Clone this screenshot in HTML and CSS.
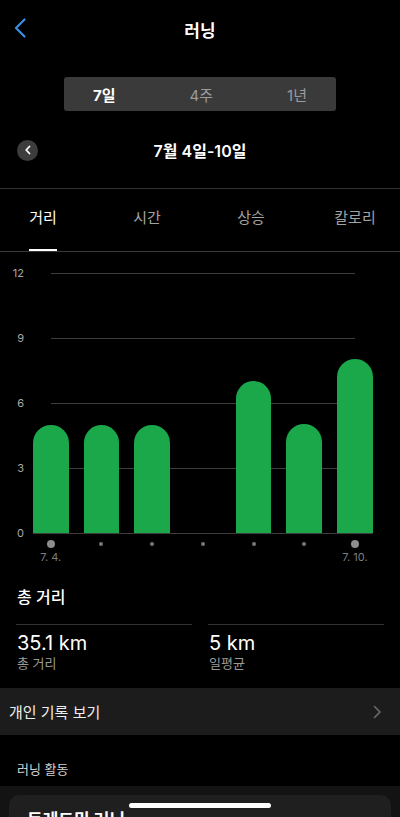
FILE: index.html
```html
<!DOCTYPE html>
<html lang="ko">
  <head>
    <meta charset="UTF-8" />
    <meta name="viewport" content="width=device-width, initial-scale=1.0" />
    <title>러닝</title>
    <link rel="stylesheet" href="styles.css">
  </head>
  <body>
    <div class="screen">
      <div class="nav">
        <button class="nav-back" aria-label="뒤로">
          <svg width="12" height="20" viewBox="0 0 12 20">
            <path d="M10.5 1.5 L2 10 L10.5 18.5" fill="none" stroke="#3a8ee6" stroke-width="2.2" stroke-linecap="round" stroke-linejoin="round" />
          </svg>
        </button>
        <h1 class="nav-title">러닝</h1>
        <span></span>
      </div>

      <div class="segment">
        <span class="segment-item active">7일</span>
        <span class="segment-item">4주</span>
        <span class="segment-item">1년</span>
      </div>

      <div class="date-row">
        <button class="date-prev" aria-label="이전">
          <svg width="8" height="10" viewBox="0 0 8 10">
            <path d="M5.5 1.5 L2.2 5 L5.5 8.5" fill="none" stroke="#fff" stroke-width="1.8" stroke-linecap="round" stroke-linejoin="round" />
          </svg>
        </button>
        <div class="date-label">7월 4일-10일</div>
      </div>

      <div class="tabs">
        <div class="tab-list">
          <div class="tab"><span class="tab-label active">거리</span></div>
          <div class="tab"><span class="tab-label">시간</span></div>
          <div class="tab"><span class="tab-label">상승</span></div>
          <div class="tab"><span class="tab-label">칼로리</span></div>
        </div>
      </div>

      <div class="chart">
        <div class="plot">
          <div class="gridlines">
            <div class="grid-row"><span class="y-label">12</span><span class="line"></span></div>
            <div class="grid-row"><span class="y-label">9</span><span class="line"></span></div>
            <div class="grid-row"><span class="y-label">6</span><span class="line"></span></div>
            <div class="grid-row"><span class="y-label">3</span><span class="line"></span></div>
            <div class="grid-row"><span class="y-label">0</span><span class="line base"></span></div>
          </div>
          <div class="bars">
            <div class="bar" style="height: 108px"></div>
            <div class="bar" style="height: 108px"></div>
            <div class="bar" style="height: 108px"></div>
            <div class="bar empty"></div>
            <div class="bar" style="height: 152px"></div>
            <div class="bar" style="height: 109px"></div>
            <div class="bar" style="height: 174px"></div>
          </div>
        </div>
        <div class="x-axis">
          <div class="x-col"><span class="dot big"></span><span class="x-label">7. 4.</span></div>
          <div class="x-col"><span class="dot"></span></div>
          <div class="x-col"><span class="dot"></span></div>
          <div class="x-col"><span class="dot"></span></div>
          <div class="x-col"><span class="dot"></span></div>
          <div class="x-col"><span class="dot"></span></div>
          <div class="x-col"><span class="dot big"></span><span class="x-label">7. 10.</span></div>
        </div>
      </div>

      <div class="summary">
        <h2 class="summary-title">총 거리</h2>
        <div class="stats">
          <div class="stat">
            <div class="stat-value">35.1 km</div>
            <div class="stat-label">총 거리</div>
          </div>
          <div class="stat">
            <div class="stat-value">5 km</div>
            <div class="stat-label">일평균</div>
          </div>
        </div>
      </div>

      <div class="list-row">
        <span>개인 기록 보기</span>
        <svg width="9" height="14" viewBox="0 0 9 14">
          <path d="M1.5 1.5 L7 7 L1.5 12.5" fill="none" stroke="#6b6b6b" stroke-width="1.6" stroke-linecap="round" stroke-linejoin="round" />
        </svg>
      </div>

      <div class="section-title">러닝 활동</div>

      <div class="activities">
        <div class="activity-card">
          <div class="activity-name">트레드밀 러닝</div>
        </div>
      </div>

      <div class="home-indicator"></div>
    </div>
  </body>
</html>
```

FILE: styles.css
```css
* {
  box-sizing: border-box;
}
body {
  margin: 0;
  background-color: #000;
  color: #fff;
  font-family: Inter, "Noto Sans CJK KR", sans-serif;
}
button {
  border: none;
  background: none;
  padding: 0;
  cursor: pointer;
}
.screen {
  position: relative;
  width: 400px;
  height: 817px;
  overflow: hidden;
}

/* nav */
.nav {
  display: grid;
  grid-template-columns: 60px 1fr 60px;
  align-items: center;
  height: 58px;
}
.nav-back {
  display: flex;
  padding-left: 14px;
  margin-top: -3px;
}
.nav-title {
  margin: 0;
  text-align: center;
  font-size: 17px;
  font-weight: 600;
}

/* period switch */
.segment {
  display: flex;
  justify-content: space-between;
  align-items: center;
  width: 272px;
  height: 34px;
  margin: 19px 0 0 64px;
  padding: 0 29px;
  background-color: #3a3a3a;
  border-radius: 3px;
  font-size: 15px;
}
.segment-item {
  color: #9b9b9b;
}
.segment-item.active {
  color: #fff;
  font-weight: 700;
}

/* date */
.date-row {
  display: flex;
  align-items: center;
  height: 40px;
  margin-top: 19px;
  padding-left: 17px;
}
.date-prev {
  display: flex;
  align-items: center;
  justify-content: center;
  width: 21px;
  height: 21px;
  border-radius: 50%;
  background-color: #3d3d3d;
}
.date-label {
  flex: 1;
  margin-right: 38px;
  text-align: center;
  font-size: 16px;
  font-weight: 600;
}

/* tabs */
.tabs {
  margin-top: 18px;
  border-top: 1px solid #333;
  border-bottom: 1px solid #3a3a3a;
  overflow: hidden;
}
.tab-list {
  display: grid;
  grid-template-columns: repeat(4, 104px);
  margin-left: -9px;
  font-size: 15px;
}
.tab {
  display: flex;
  justify-content: center;
}
.tab-label {
  display: block;
  height: 62px;
  padding-top: 19px;
  line-height: 20px;
  color: #a3a3a3;
  white-space: nowrap;
  border-bottom: 2px solid transparent;
}
.tab-label.active {
  color: #fff;
  border-bottom-color: #fff;
}

/* chart */
.chart {
  padding-top: 14px;
}
.plot {
  display: grid;
}
.gridlines,
.bars {
  grid-area: 1 / 1;
}
.gridlines {
  display: flex;
  flex-direction: column;
  gap: 51px;
}
.grid-row {
  display: flex;
  align-items: center;
  height: 14px;
}
.y-label {
  width: 24px;
  text-align: right;
  font-size: 11px;
  color: #a8a8a8;
}
.line {
  width: 304px;
  height: 1px;
  margin-left: 27px;
  background-color: #3c3c3c;
}
.line.base {
  width: 340px;
  margin-left: 9px;
}
.bars {
  display: flex;
  align-items: flex-end;
  gap: 15.2px;
  padding: 0 0 7px 33px;
}
.bar {
  width: 35.5px;
  background-color: #1aa84b;
  border-radius: 18px 18px 0 0;
}
.bar.empty {
  height: 0;
}
.x-axis {
  display: flex;
  gap: 15.2px;
  padding-left: 33px;
}
.x-col {
  display: flex;
  flex-direction: column;
  align-items: center;
  width: 35.5px;
}
.dot {
  width: 4px;
  height: 4px;
  margin: 2px 0;
  border-radius: 50%;
  background-color: #777;
}
.dot.big {
  width: 8px;
  height: 8px;
  margin: 0;
  background-color: #8c8c8c;
}
.x-label {
  margin-top: 2px;
  line-height: 14px;
  font-size: 11px;
  color: #7e7e7e;
  white-space: nowrap;
}

/* summary */
.summary {
  padding: 0 16px;
}
.summary-title {
  margin: 22px 0 0 1px;
  line-height: 22px;
  font-size: 16px;
  font-weight: 500;
}
.stats {
  display: grid;
  grid-template-columns: 1fr 1fr;
  gap: 16px;
  margin-top: 16px;
}
.stat {
  padding: 6px 0 0 1px;
  border-top: 1px solid #333;
}
.stat-value {
  line-height: 24px;
  font-size: 20px;
}
.stat-label {
  line-height: 16px;
  font-size: 13px;
  color: #9a9a9a;
}
.list-row {
  display: flex;
  justify-content: space-between;
  align-items: center;
  height: 47px;
  margin-top: 17px;
  padding: 0 18px 0 9px;
  background-color: #1c1c1c;
  font-size: 15px;
  color: #eee;
}
.section-title {
  padding: 25px 0 0 17px;
  line-height: 18px;
  font-size: 13px;
  color: #d0d0d0;
}
.activities {
  margin-top: 8px;
  padding: 9px;
  background-color: #131313;
}
.activity-card {
  height: 120px;
  padding: 14px 18px;
  border-radius: 10px;
  background-color: #1f1f1f;
}
.activity-name {
  line-height: 22px;
  font-size: 17px;
  font-weight: 600;
}
.home-indicator {
  position: absolute;
  left: 129px;
  bottom: 9px;
  width: 142px;
  height: 5px;
  border-radius: 3px;
  background-color: #fff;
}
```
